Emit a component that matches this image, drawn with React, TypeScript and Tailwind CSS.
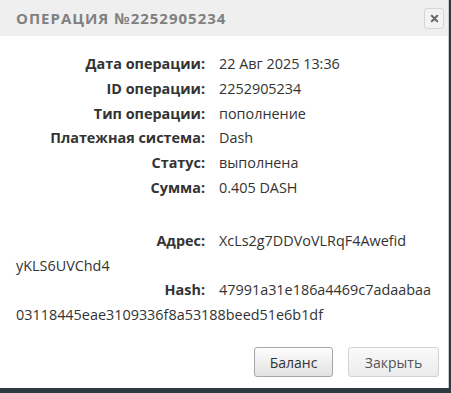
import type { ReactElement, ReactNode } from 'react';

const rows: Array<[string, string]> = [
  ['Дата операции:', '22 Авг 2025 13:36'],
  ['ID операции:', '2252905234'],
  ['Тип операции:', 'пополнение'],
  ['Платежная система:', 'Dash'],
  ['Статус:', 'выполнена'],
  ['Сумма:', '0.405 DASH'],
];

function Row({ label, children }: { label: string; children: ReactNode }): ReactElement {
  return (
    <div className="break-all text-[14.4px] leading-[24.8px]">
      <span className="inline-block w-[203px] pr-[14px] text-right font-bold">{label}</span>
      {children}
    </div>
  );
}

export default function App(): ReactElement {
  return (
    <div className="flex h-[393px] w-[451px] flex-col bg-[#2f3a40] font-['Open_Sans',sans-serif]">
      <div className="mr-[2px] flex h-[388px] flex-col border-r border-[#c8c8c8] bg-white">
        <div className="flex h-[36px] shrink-0 items-center justify-between bg-[#efefef] pl-4 pr-[4px]">
          <h1 className="text-[15px] font-bold uppercase tracking-[1px] text-[#808080]">
            Операция №2252905234
          </h1>
          <button
            type="button"
            aria-label="Закрыть"
            className="flex h-[21px] w-[20px] items-center justify-center rounded-[3px] border border-[#d6d6d6] bg-[#f3f3f3]"
          >
            <svg viewBox="0 0 10 10" className="h-[9px] w-[9px]" stroke="#6b6b6b" strokeWidth="2.4" strokeLinecap="round">
              <path d="M2 2l6 6M8 2l-6 6" />
            </svg>
          </button>
        </div>

        <div className="flex-1 pl-4 pr-[12px] pt-[16px] text-[#333]">
          {rows.map(([l, v]) => (
            <Row key={l} label={l}>
              {v}
            </Row>
          ))}
          <div className="h-[28px]" />
          <Row label="Адрес:">
            XcLs2g7DDVoVLRqF4Awefid
            <br />
            yKLS6UVChd4
          </Row>
          <Row label="Hash:">
            47991a31e186a4469c7adaabaa
            <br />
            03118445eae3109336f8a53188beed51e6b1df
          </Row>
        </div>

        <div className="flex justify-end gap-[15px] pb-[11px] pr-[9px]">
          <button
            type="button"
            className="h-[30px] w-[79px] rounded-[3px] border border-[#a6a6a6] bg-gradient-to-b from-[#fdfdfd] to-[#e2e2e2] text-[14px] text-[#333]"
          >
            Баланс
          </button>
          <button
            type="button"
            className="h-[30px] w-[91px] rounded-[3px] border border-[#d2d2d2] bg-gradient-to-b from-[#fafafa] to-[#ececec] text-[14px] text-[#555]"
          >
            Закрыть
          </button>
        </div>
      </div>
    </div>
  );
}
